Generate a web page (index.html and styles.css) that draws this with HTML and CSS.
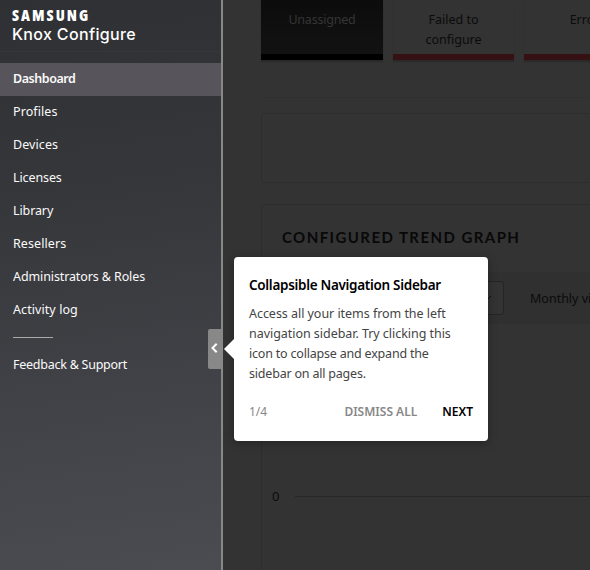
FILE: index.html
```html
<!DOCTYPE html>
<html lang="en">
<head>
<meta charset="utf-8">
<title>Knox Configure</title>
<link rel="stylesheet" href="styles.css">
</head>
<body>
<div class="app">
  <aside class="sidebar">
    <header class="brand">
      <div class="brand-company">SAMSUNG</div>
      <div class="brand-product">Knox Configure</div>
    </header>
    <nav class="nav">
      <a class="nav-item active">Dashboard</a>
      <a class="nav-item wide">Profiles</a>
      <a class="nav-item wide">Devices</a>
      <a class="nav-item">Licenses</a>
      <a class="nav-item">Library</a>
      <a class="nav-item wide">Resellers</a>
      <a class="nav-item">Administrators &amp; Roles</a>
      <a class="nav-item wide">Activity log</a>
      <hr class="nav-divider">
      <a class="nav-item support">Feedback &amp; Support</a>
    </nav>
    <button class="collapse" aria-label="Collapse"><svg width="13" height="14" viewBox="0 0 13 14"><path d="M8.7 2.7 4.5 7l4.2 4.3" fill="none" stroke="#fff" stroke-width="2"/></svg></button>
  </aside>
  <main class="content">
    <section class="cards">
      <div class="card selected">Unassigned</div>
      <div class="card">Failed to configure</div>
      <div class="card error">Errors</div>
    </section>
    <section class="panel summary"></section>
    <section class="panel trend">
      <h2 class="trend-title">CONFIGURED TREND GRAPH</h2>
      <div class="filters">
        <div class="select"><svg width="10" height="8" viewBox="0 0 10 8"><path d="M1 2l4 4 4-4" fill="none" stroke="#0d0d0d"/></svg></div>
        <span class="view">Monthly view</span>
      </div>
      <div class="axis"><span>0</span><i class="axis-line"></i></div>
    </section>
  </main>
  <div class="tour">
    <h3 class="tour-title">Collapsible Navigation Sidebar</h3>
    <p class="tour-text"><span class="loose">Access all your items from the left</span><br><span class="loose">navigation sidebar. Try clicking this</span><br><span class="tight">icon to collapse and expand the</span><br><span class="tight">sidebar on all pages.</span></p>
    <footer class="tour-actions"><span class="step">1/4</span><b class="dismiss">DISMISS ALL</b><b class="next">NEXT</b></footer>
  </div>
</div>
</body>
</html>
```
FILE: styles.css
```css
* { box-sizing: border-box; }
body { margin: 0; font: 13px/20px "Noto Sans", sans-serif; }
.app { position: relative; display: flex; width: 590px; height: 570px; overflow: hidden; background: #333; }
.sidebar { position: relative; flex: none; width: 223px; border-right: 2px solid #888; background: linear-gradient(172deg, #2f3034 0%, #36373b 35%, #424348 70%, #4b4b52 100%); color: #fafafa; }
.brand { height: 52px; padding: 7px 12px 0; border-bottom: 1px solid #36373b; color: #fff; }
.brand-company { font: 800 15.5px/17px "Open Sans", sans-serif; font-stretch: 80%; letter-spacing: 2.05px; }
.brand-product { font: 500 16px/20px Inter, sans-serif; letter-spacing: .35px; }
.nav { display: flex; flex-direction: column; padding-top: 11px; }
.nav-item { height: 33px; padding-left: 13px; line-height: 31px; font-size: 12.5px; letter-spacing: -.11px; }
.nav-item.wide { letter-spacing: .08px; }
.nav-item.active { background: #57555b; font-weight: 600; letter-spacing: -.45px; }
.nav-item.support { line-height: 33px; letter-spacing: -.25px; }
.nav-divider { width: 40px; height: 1px; margin: 10px 0 10px 13px; border: 0; background: #aaa; }
.collapse { position: absolute; right: 0; top: 329px; display: flex; align-items: center; width: 13px; height: 40px; padding: 0 0 3px; border: 0; border-radius: 2px 0 0 2px; background: #888; }
.content { flex: none; width: 460px; padding-left: 38px; color: #0b0b0b; }
.cards { display: flex; gap: 10px; height: 98px; border-bottom: 1px solid #303030; }
.card { flex: none; width: 121px; height: 60px; padding: 10px 20px 0; border-bottom: 6px solid #351113; box-shadow: 0 2px 1px #2a2a2a; text-align: center; font-size: 12.5px; }
.card.selected { width: 122px; padding-left: 18px; padding-right: 18px; border-color: #000; background: linear-gradient(#0c0c0d, #121213); color: #353535; letter-spacing: -.2px; }
.card.error { width: 127px; }
.panel { border: 1px solid #2d2d2d; border-radius: 4px; }
.summary { height: 70px; margin-top: 15px; }
.trend { height: 390px; margin-top: 21px; }
.trend-title { margin: 22px 0 0 20px; font: 700 15px/20px Lato, sans-serif; letter-spacing: 1.43px; color: #080808; }
.filters { display: flex; align-items: center; height: 52px; margin-top: 25px; padding-left: 20px; background: #303030; }
.select { display: flex; align-items: center; justify-content: flex-end; width: 222px; height: 34px; padding-right: 11px; border: 1px solid #252525; border-radius: 3px; background: #333; }
.view { margin-left: 26px; padding-top: 2px; font-size: 12.5px; white-space: nowrap; }
.axis { display: flex; align-items: center; margin-top: 162px; padding-left: 10px; }
.axis-line { flex: 1; height: 1px; margin-left: 16px; background: #272727; }
.tour { position: absolute; left: 234px; top: 257px; width: 254px; height: 184px; padding: 18px 15px 0; border-radius: 4px; background: #fff; box-shadow: 0 2px 10px rgba(0,0,0,.3); }
.tour::before { content: ""; position: absolute; left: -10px; top: 82px; border: solid transparent; border-width: 10px 10px 10px 0; border-right-color: #fff; }
.tour-title { margin: 0; font-size: 13.5px; font-weight: 600; line-height: 20px; letter-spacing: -.3px; white-space: nowrap; color: #000; }
.tour-text { margin: 9px 0 0; font-size: 12.5px; white-space: nowrap; color: #444; }
.loose { letter-spacing: -.04px; }
.tight { letter-spacing: -.2px; }
.tour-actions { display: flex; margin-top: 18px; font-size: 12px; line-height: 20px; }
.step { flex: 1; color: #888; }
.dismiss { color: #888; font-weight: 600; }
.next { margin-left: 25px; color: #000; font-weight: 600; }
```
